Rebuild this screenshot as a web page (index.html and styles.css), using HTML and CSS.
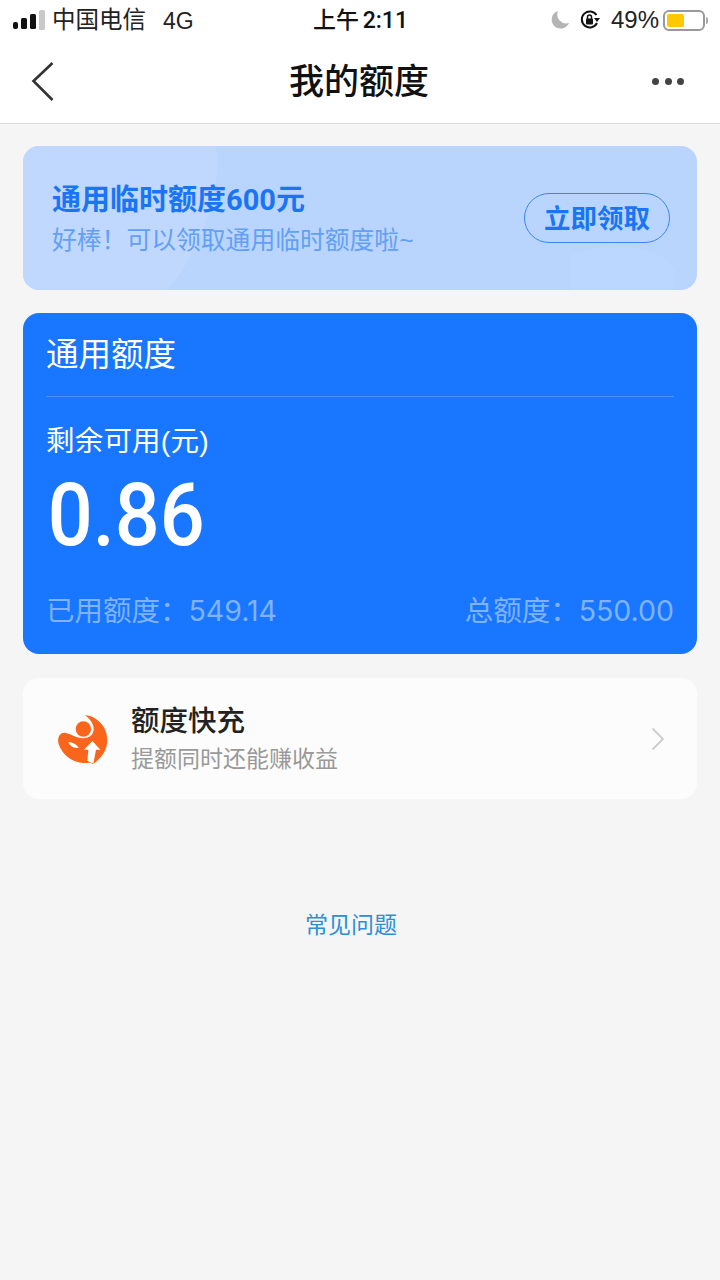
FILE: index.html
```html
<!doctype html>
<html lang="zh-CN">
<head>
<meta charset="utf-8">
<meta name="viewport" content="width=device-width, initial-scale=1">
<title>我的额度</title>
<link rel="stylesheet" href="styles.css">
</head>
<body>

<header class="top">

	<div class="status">
		<div class="status-left">
			<svg class="signal" width="32" height="22" viewBox="0 0 32 22">
				<rect x="0" y="13" width="5" height="7" rx="2" fill="#111"/>
				<rect x="8" y="9" width="6" height="11" rx="1.500" fill="#111"/>
				<rect x="17" y="5" width="6" height="15" rx="1.500" fill="#111"/>
				<rect x="26" y="1" width="6" height="20" rx="1.500" fill="#c9c9c9"/>
			</svg>
			<span class="carrier">中国电信</span>
			<span class="net">4G</span>
		</div>
		<div class="clock">上午 2:11</div>
		<div class="status-right">
			<svg class="moon" width="20" height="20" viewBox="0 0 20 20">
				<path d="M8 1A9 9 0 1 0 19 13 A9 9 0 0 1 8 1Z" fill="#b5b5b5"/>
			</svg>
			<svg class="lock" width="22" height="22" viewBox="0 0 22 22">
				<path d="M18 14A8 8 0 1 1 17.500 6" fill="none" stroke="#111" stroke-width="2"/>
				<path d="M15 9h6l-3 4z" fill="#111"/>
				<rect x="7" y="9.500" width="7" height="6" rx="1" fill="#111"/>
				<path d="M8.500 10V8a2 2 0 0 1 4 0v2" fill="none" stroke="#111" stroke-width="1.500"/>
			</svg>
			<span class="pct">49%</span>
			<div class="battery"><div class="battery-fill"></div></div>
			<div class="battery-cap"></div>
		</div>
	</div>

	<nav class="nav">
		<svg class="back" width="24" height="40" viewBox="0 0 24 40">
			<path d="M21.500 1L2.500 19l19 19" fill="none" stroke="#333" stroke-width="2.600"/>
		</svg>
		<h1 class="nav-title">我的额度</h1>
		<div class="dots"><i></i><i></i><i></i></div>
	</nav>

</header>

<main class="page">

	<section class="banner">
		<svg class="banner-bg" width="674" height="144" viewBox="0 0 674 144" preserveAspectRatio="none">
			<path d="M0 0H193C200 40 180 100 145 144H0Z" fill="#c0d8fe"/>
			<path d="M548 144V110C570 95 640 95 651 125V144Z" fill="#bcd7ff"/>
		</svg>
		<div class="banner-text">
			<div class="banner-title">通用临时额度600元</div>
			<div class="banner-sub">好棒！可以领取通用临时额度啦~</div>
		</div>
		<button class="banner-btn">立即领取</button>
	</section>

	<section class="quota">
		<div class="quota-head">通用额度</div>
		<div class="quota-label">剩余可用(元)</div>
		<div class="quota-num">0.86</div>
		<div class="quota-foot">
			<span>已用额度：549.14</span>
			<span>总额度：550.00</span>
		</div>
	</section>

	<section class="charge">
		<svg class="charge-logo" width="64" height="68" viewBox="0 0 192 204">
			<path d="M105 30C145 35 172 68 172 105C172 135 155 160 128 178C122 170 112 174 100 174C70 174 38 152 26 118C20 96 32 80 48 84C58 87 68 92 80 96C108 106 131 95 131 72C131 55 119 42 105 30Z" fill="#f9661b"/>
			<circle cx="100" cy="72" r="23" fill="#f9661b"/>
			<path d="M55 112C65 110 80 118 86 128C75 132 60 125 55 112Z" fill="#fff"/>
			<path d="M127 108L151 134H138L130 176L112 167L115 134H102Z" fill="#fff"/>
		</svg>
		<div class="charge-text">
			<div class="charge-title">额度快充</div>
			<div class="charge-sub">提额同时还能赚收益</div>
		</div>
		<svg class="chev" width="14" height="24" viewBox="0 0 14 24">
			<path d="M1.500 1.500L12 12L1.500 22.500" fill="none" stroke="#ccc" stroke-width="1.800"/>
		</svg>
	</section>

	<a class="faq">常见问题</a>

</main>

</body>
</html>
```

FILE: styles.css
```css
* { box-sizing: border-box; }

html { height: 100%; }

body { margin: 0; height: 1280px; overflow: hidden; background-color: #f5f5f5; color: #111;
	font-family: "Liberation Sans", "Noto Sans CJK SC", sans-serif; }

.top { background-color: #fff; border-bottom: 1px solid #ddd; height: 124px; }

.status { display: flex; align-items: center; justify-content: space-between; height: 40px; padding: 0 12px; position: relative; }
.status-left { display: flex; align-items: center; font-size: 24px; color: #222; }
.signal { margin: 0 7px 0 1px; }
.carrier { font-size: 23.500px; margin-top: -5px; }
.net { font-size: 23px; margin: 2px 0 0 17px; }
.clock { font-family: Roboto, "Noto Sans CJK SC", sans-serif; font-size: 23px; font-weight: 500; line-height: 34px; position: absolute; left: 313px; top: 4px; word-spacing: -2px; }
.status-right { display: flex; align-items: center; font-size: 24px; color: #222; }
.moon { margin-right: 9px; }
.lock { margin-right: 10px; }
.pct { margin-right: 4px; }
.battery { border: 2px solid #999; border-radius: 6px; width: 42px; height: 21px; padding: 2px; }
.battery-fill { background-color: #ffc800; border-radius: 2px; height: 100%; width: 17px; }
.battery-cap { background-color: #aaa; border-radius: 0 2px 2px 0; height: 7px; width: 2px; margin-left: 1px; }

.nav { display: flex; align-items: center; justify-content: space-between; height: 83px; padding: 0 36px 0 31px; position: relative; }
.nav-title { font-size: 35px; font-weight: 500; line-height: 48px; margin: 0; position: absolute; left: 289px; top: 18px; }
.dots { display: flex; gap: 5.500px; }
.dots i { background-color: #444; border-radius: 50%; display: block; height: 7px; width: 7px; }

.page { padding: 22px 23px 0; }

.banner { align-items: center; background-color: #b9d5fe; border-radius: 16px; display: flex; height: 144px; justify-content: space-between; overflow: hidden; padding: 0 27px 0 29px; position: relative; }
.banner-bg { left: 0; position: absolute; top: 0; }
.banner-text { position: relative; margin-top: 2px; }
.banner-title { color: #1a75f5; font-family: Roboto, "Noto Sans CJK SC", sans-serif; font-size: 29px; font-weight: 700; line-height: 40px; }
.banner-sub { color: #62a0f6; font-size: 24.800px; line-height: 34px; margin-top: 4px; }
.banner-btn { background: transparent; border: 1px solid #3a86f2; border-radius: 25px; color: #1a75f5; font: inherit; font-size: 26.500px; font-weight: 700; height: 50px; margin-top: 0; padding: 0 0 4px; position: relative; width: 146px; }

.quota { background-color: #1976ff; border-radius: 16px; color: #fff; height: 341px; margin-top: 23px; padding: 0 23px; }
.quota-head { border-bottom: 1px solid #4a92ff; font-size: 32.500px; height: 84px; line-height: 84px; }
.quota-label { font-size: 28.500px; letter-spacing: 0.200px; line-height: 40px; margin-top: 24px; }
.quota-num { font-family: Roboto, sans-serif; font-size: 87px; font-weight: 500; line-height: 84px; margin-top: 12px; padding-left: 2px; transform: scaleX(0.91); transform-origin: left; }
.quota-foot { color: #7fb3ff; display: flex; font-family: Inter, "Noto Sans CJK SC", sans-serif; font-size: 28.500px; font-weight: 400; justify-content: space-between; line-height: 40px; margin-top: 34px; }

.charge { align-items: center; background-color: #fcfcfc; border-radius: 16px; display: flex; height: 121px; margin-top: 24px; padding: 0 32px 0 27px; }
.charge-logo { flex: none; margin-right: 17px; }
.charge-text { flex: 1; }
.charge-title { color: #222; font-size: 28.500px; font-weight: 500; line-height: 40px; }
.charge-sub { color: #999; font-size: 23px; line-height: 34px; margin-top: 1px; }

.faq { color: #2b90d9; display: block; font-size: 23px; line-height: 34px; margin-top: 109px; padding-right: 18px; text-align: center; }
```
